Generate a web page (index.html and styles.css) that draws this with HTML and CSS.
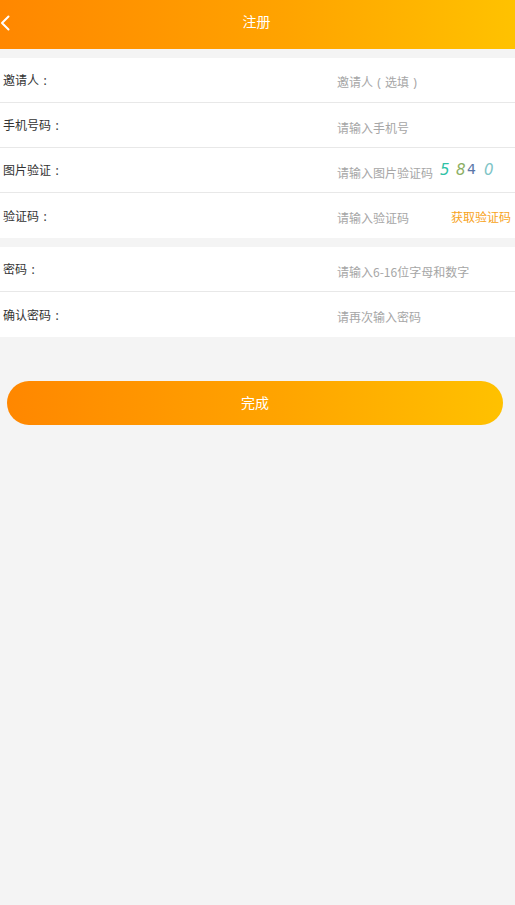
FILE: index.html
```html
<!DOCTYPE html>
<html lang="zh">
<head>
<meta charset="utf-8">
<title>注册</title>
<link rel="stylesheet" href="styles.css">
</head>
<body>
<header class="topbar">
  <span class="back">
    <svg width="10" height="16" viewBox="0 0 10 16"><path d="M8.5 1.5 L2 8 L8.5 14.5" fill="none" stroke="#fff" stroke-width="2" stroke-linecap="round" stroke-linejoin="round"/></svg>
  </span>
  <h1 class="title">注册</h1>
</header>
<main>
  <section class="group">
    <div class="row"><span class="label">邀请人<span class="colon">:</span></span><span class="ph">邀请人<span class="paren">(</span>选填<span class="paren">)</span></span></div>
    <div class="row"><span class="label">手机号码<span class="colon">:</span></span><span class="ph">请输入手机号</span></div>
    <div class="row"><span class="label">图片验证<span class="colon">:</span></span><span class="ph">请输入图片验证码</span>
      <span class="captcha"><i class="d1">5</i><i class="d2">8</i><i class="d3">4</i><i class="d4">0</i></span></div>
    <div class="row"><span class="label">验证码<span class="colon">:</span></span><span class="ph">请输入验证码</span><span class="getcode">获取验证码</span></div>
  </section>
  <section class="group">
    <div class="row"><span class="label">密码<span class="colon">:</span></span><span class="ph">请输入6-16位字母和数字</span></div>
    <div class="row"><span class="label">确认密码<span class="colon">:</span></span><span class="ph">请再次输入密码</span></div>
  </section>
  <div class="btnwrap"><button class="submit">完成</button></div>
</main>
</body>
</html>
```
FILE: styles.css
```css
* { box-sizing: border-box; }
html, body { margin: 0; padding: 0; }
body {
  background: #f4f4f4;
  font-family: "Noto Sans CJK SC", "Noto Sans", sans-serif;
  width: 515px;
  min-height: 905px;
}
.topbar {
  height: 49px;
  background: linear-gradient(90deg, #ff8700 0%, #ffa300 55%, #ffc200 100%);
  display: flex;
  align-items: center;
  justify-content: center;
  position: relative;
}
.back {
  position: absolute;
  left: 0;
  top: 15px;
  width: 10px;
  height: 16px;
  display: block;
}
.back svg { display: block; }
.title {
  margin: 0;
  color: #fff;
  font-size: 14px;
  font-weight: normal;
  line-height: 1;
  position: relative;
  top: -4px;
  left: -1px;
}
main { padding-top: 9px; }
.group {
  background: #fff;
  margin-bottom: 9px;
}
.row {
  height: 45px;
  display: flex;
  align-items: center;
  border-bottom: 1px solid #e8e8e8;
  padding-left: 3px;
  position: relative;
}
.row:last-child { border-bottom: none; }
.label {
  width: 334px;
  font-size: 12px;
  color: #333;
}
.colon, .paren {
  display: inline-block;
  width: 12px;
  text-align: center;
  font-family: "Noto Sans", sans-serif;
}
.ph {
  font-size: 12px;
  color: #a6a6a6;
  position: relative;
  top: 2px;
}
.captcha {
  margin-left: 7px;
  display: flex;
  font-size: 15px;
  font-family: "DejaVu Sans", sans-serif;
  position: relative;
  top: 0;
}
.captcha i { display: inline-block; }
.captcha .d1 { color: #2fc2a6; font-style: italic; width: 16px; }
.captcha .d2 { color: #8cae62; font-style: italic; width: 11px; }
.captcha .d3 { color: #5a76a8; font-style: normal; width: 17px; font-size: 14px; }
.captcha .d4 { color: #7ec4c6; font-style: italic; }
.getcode {
  position: absolute;
  right: 4px;
  font-size: 12px;
  color: #f7a321;
  top: 15px;
}
.btnwrap { padding: 35px 12px 0 7px; }
.submit {
  display: block;
  width: 496px;
  height: 44px;
  border: none;
  border-radius: 22px;
  background: linear-gradient(90deg, #ff8700 0%, #ffa400 55%, #ffc100 100%);
  color: #fff;
  font-family: "Noto Sans CJK SC", "Noto Sans", sans-serif;
  font-size: 14px;
  padding: 0 0 2px;
}
```
